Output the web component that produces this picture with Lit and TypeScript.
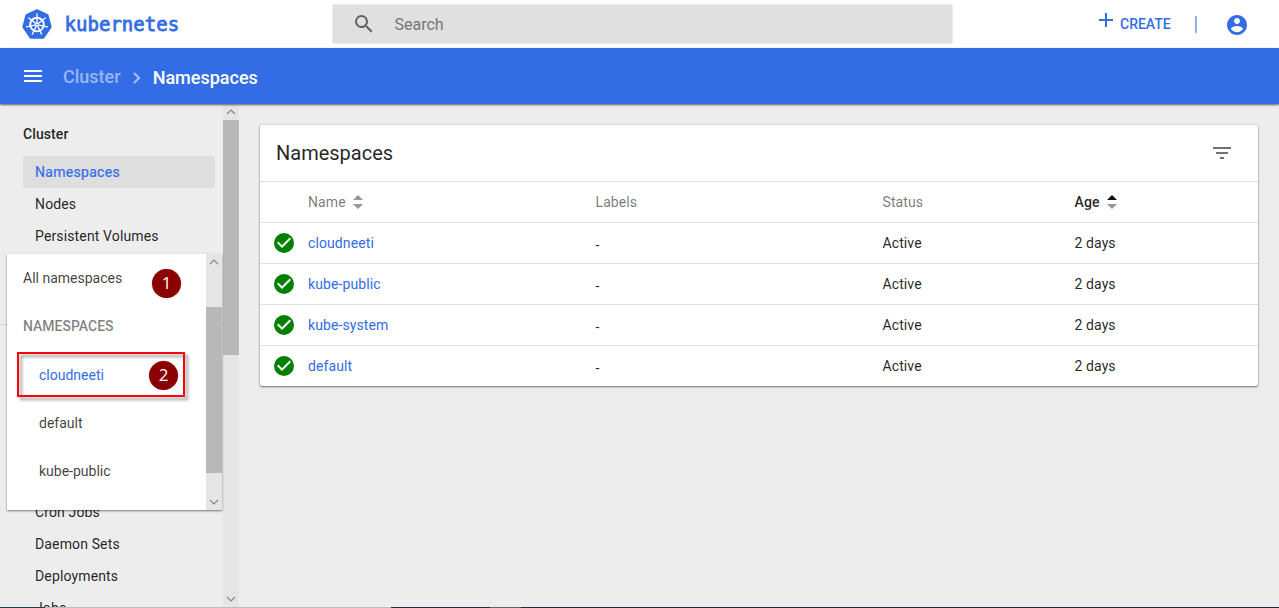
import { LitElement, html, css, svg } from "lit";
import { customElement, property } from "lit/decorators.js";

const spokes = [0, 1, 2, 3, 4, 5, 6];

@customElement("scroll-bar")
class ScrollBar extends LitElement {
  @property({ type: Number }) before = 0;
  @property({ type: Number }) thumb = 100;
  static styles = css`
    :host { display: flex; flex-direction: column; background: #e5e5e5; width: 16px; flex: none; }
    .arrow { height: 16px; display: flex; align-items: center; justify-content: center; flex: none; }
    .thumb { background: #b8b8b8; flex: none; }
    .rest { flex: 1; }
    path { fill: none; stroke: #838383; stroke-width: 1.1; }
  `;
  render() {
    return html`
      <div class="arrow"><svg width="10" height="6" viewBox="0 0 10 6"><path d="M1 5l4-4 4 4" /></svg></div>
      <div style="height:${this.before}px"></div>
      <div class="thumb" style="height:${this.thumb}px"></div>
      <div class="rest"></div>
      <div class="arrow"><svg width="10" height="6" viewBox="0 0 10 6"><path d="M1 1l4 4 4-4" /></svg></div>
    `;
  }
}

@customElement("app-root")
class AppRoot extends LitElement {
  static styles = css`
    :host { display: flex; flex-direction: column; height: 608px; width: 1279px; overflow: hidden; position: relative;
      font-family: Roboto, sans-serif; font-size: 14px; color: rgba(0,0,0,.87); background: #ededed; box-sizing: border-box; }
    * { box-sizing: border-box; }
    svg { display: block; flex: none; }
    .top { height: 48px; background: #fff; display: flex; flex: none; padding-left: 22px; }
    .logo { margin-top: 9px; }
    .wordmark { margin-left: 12px; width: 120px; height: 48px; }
    .wordmark text { font-family: "DejaVu Sans Mono", monospace; font-size: 19px; fill: #326de6; stroke: #326de6; stroke-width: .8; }
    .search { margin: 4px 0 0 148px; width: 621px; height: 40px; background: #e0e0e0; border: 1px solid #ebebeb; border-radius: 2px;
      display: flex; align-items: center; color: #757575; font-size: 16px; padding-left: 18.5px; }
    .search span { margin-left: 19px; padding-top: 1px; }
    .create { margin-left: 146px; display: flex; color: #326de6; font-weight: 500; line-height: 48px; }
    .create svg { margin: 13px 7px 0 0; }
    .divider { width: 2px; height: 17px; background: linear-gradient(90deg, #a6a0f0 50%, #84c4ff 50%); margin: 16px 0 0 24px; }
    .user { margin: 13px 0 0 28px; }
    .bar { height: 56px; background: #326de6; flex: none; display: flex; align-items: center; padding: 2px 0 0 20px; color: #fff;
      font-size: 18px; font-weight: 500; box-shadow: 0 1px 2px rgba(0,0,0,.6); position: relative; z-index: 2; }
    .bar .menu { margin-top: -2px; }
    .bar .parent { color: rgba(255,255,255,.5); margin: -2px 0 0 17px; }
    .bar .chev { margin: 2px 12px 0 12px; }
    .bar .here { padding-top: 1px; }
    .main { flex: 1; display: flex; min-height: 0; padding-bottom: 1px; }
    .side { width: 223px; padding: 14px 8px 0 23px; letter-spacing: .14px; position: relative; overflow: hidden; }
    .side .head { font-weight: 500; line-height: 32px; height: 38px; letter-spacing: .1px; }
    .item { height: 32px; line-height: 32px; padding-left: 12px; }
    .item.on { background: #dedede; border-radius: 2px; color: #326de6; -webkit-text-stroke: .2px #326de6; letter-spacing: .3px; }
    .hidden { height: 244px; }
    .rule { position: absolute; left: 0; top: 220px; width: 100%; height: 1px; background: #d0d0d0; }
    .popup { position: absolute; z-index: 3; left: 7px; top: 254px; width: 215px; height: 256px; background: #fff; display: flex;
      box-shadow: 0 1px 2px rgba(0,0,0,.5); }
    .options { flex: 1; padding-left: 16px; color: rgba(0,0,0,.76); }
    .options div { height: 48px; line-height: 48px; }
    .options .opt { padding: 1px 0 0 16px; }
    .options .cap { color: rgba(0,0,0,.5); font-weight: 500; }
    .options .sel { color: #326de6; }
    .frame { position: absolute; z-index: 4; left: 17px; top: 352px; width: 168px; height: 45px; border: 2px solid #f90505;
      filter: drop-shadow(3px 3px 1.5px rgba(0,0,0,.4)); }
    .badge { position: absolute; z-index: 5; width: 29px; height: 29px; border-radius: 50%; background: #8b0000; color: #fff;
      font: 17px/28px "Open Sans", sans-serif; text-align: center; box-shadow: 0 0 0 .5px #e4cccc; }
    .one { left: 152px; top: 269px; }
    .two { left: 149px; top: 361px; }
    .content { flex: 1; padding: 21px 0 0 21px; }
    .card { width: 998px; background: #fff; border-radius: 2px; box-shadow: 0 1px 2px rgba(0,0,0,.5), 0 0 1px 1px rgba(0,0,0,.07); }
    .title { height: 56px; display: flex; align-items: center; justify-content: space-between; padding: 0 24px 0 16px; font-size: 20px; }
    .row { height: 41px; display: grid; grid-template-columns: 48px 287.5px 287px 192px 1fr; align-items: center; border-top: 1px solid #dfdfdf; letter-spacing: .1px; }
    .row.th { color: rgba(0,0,0,.54); }
    .row .name { color: #326de6; }
    .row .ok { margin-left: 14px; }
    .row .dash { padding-top: 3px; }
    .sort { display: flex; align-items: center; gap: 7px; }
    .sort.active { color: rgba(0,0,0,.87); font-weight: 500; }
    .strip { position: absolute; z-index: 6; left: 0; bottom: 0; width: 100%; height: 1px;
      background: linear-gradient(90deg, #21404a 45px, #bdbdbd 45px, #bdbdbd 391px, #1d2f3a 391px, #1d2f3a 490px, #5a6468 490px, #5a6468 521px, #1c2938 521px); }
  `;

  private sortIcon(up: string) {
    return html`<svg width="10" height="14" viewBox="0 0 10 14"><path fill=${up} d="M0 5L5 0l5 5z" /><path fill="#969696" d="M0 9h10l-5 5z" /></svg>`;
  }

  render() {
    return html`
      <div class="top">
        <svg class="logo" width="30" height="31" viewBox="0 0 30 31">
          <path fill="#326de6" stroke="#326de6" stroke-width="2" stroke-linejoin="round" d="M15 1.2L25.6 6.2 28.7 18 21.4 28.8H8.6L1.3 18 4.4 6.2z" />
          <g fill="none" stroke="#fff" stroke-width="1.3" stroke-linecap="round">
            <circle cx="15" cy="15.6" r="6.8" stroke-width="1.9" />
            ${spokes.map((i) => svg`<path d="M15 13.6V5" transform="rotate(${(i * 360) / 7} 15 15.6)" />`)}
          </g>
          <circle cx="15" cy="15.6" r="2" fill="#fff" /><circle cx="15" cy="15.6" r=".8" fill="#326de6" />
        </svg>
        <svg class="wordmark"><text x=".6" y="31" textLength="114.5">kubernetes</text></svg>
        <div class="search">
          <svg width="24" height="24" viewBox="0 0 24 24"><path fill="#616161" d="M15.5 14h-.79l-.28-.27A6.47 6.47 0 0 0 16 9.5 6.5 6.5 0 1 0 9.5 16c1.61 0 3.09-.59 4.23-1.57l.27.28v.79l5 4.99L20.49 19l-4.99-5zm-6 0C7.01 14 5 11.99 5 9.5S7.01 5 9.5 5 14 7.01 14 9.5 11.99 14 9.5 14z" /></svg>
          <span>Search</span>
        </div>
        <div class="create">
          <svg width="14" height="14" viewBox="0 0 14 14"><path fill="#326de6" d="M6 0h2v6h6v2H8v6H6V8H0V6h6z" /></svg><span>CREATE</span>
        </div>
        <div class="divider"></div>
        <svg class="user" width="24" height="24" viewBox="0 0 24 24"><path fill="#326de6" d="M12 2C6.48 2 2 6.48 2 12s4.48 10 10 10 10-4.48 10-10S17.52 2 12 2zm0 3c1.66 0 3 1.34 3 3s-1.34 3-3 3-3-1.34-3-3 1.34-3 3-3zm0 14.2c-2.5 0-4.71-1.28-6-3.22.03-1.99 4-3.08 6-3.08 1.99 0 5.97 1.09 6 3.08-1.29 1.94-3.5 3.22-6 3.22z" /></svg>
      </div>
      <div class="bar">
        <svg class="menu" width="26" height="24" viewBox="0 0 26 24"><path fill="#fff" d="M4 6h18v2H4zM4 11h18v2H4zM4 16h18v2H4z" /></svg>
        <span class="parent">Cluster</span>
        <svg class="chev" width="8" height="12" viewBox="0 0 8 12"><path d="M1 1l5 5-5 5" fill="none" stroke="#a9c1f5" stroke-width="2" /></svg>
        <span class="here">Namespaces</span>
      </div>
      <div class="main">
        <div class="side">
          <div class="rule"></div>
          <div class="head">Cluster</div>
          <div class="item on">Namespaces</div>
          <div class="item">Nodes</div>
          <div class="item">Persistent Volumes</div>
          <div class="hidden"></div>
          <div class="item">Cron Jobs</div>
          <div class="item">Daemon Sets</div>
          <div class="item">Deployments</div>
          <div class="item">Jobs</div>
        </div>
        <scroll-bar .before=${0} .thumb=${235}></scroll-bar>
        <div class="content">
          <div class="card">
            <div class="title">Namespaces
              <svg width="24" height="24" viewBox="0 0 24 24"><path fill="#757070" d="M10 18h4v-2h-4v2zM3 6v2h18V6H3zm3 7h12v-2H6v2z" /></svg>
            </div>
            <div class="row th"><span></span><span class="sort">Name ${this.sortIcon("#969696")}</span><span>Labels</span><span>Status</span><span class="sort active">Age ${this.sortIcon("#111")}</span></div>
            ${["cloudneeti", "kube-public", "kube-system", "default"].map((n) => html`
              <div class="row">
                <svg class="ok" width="20" height="20" viewBox="2 2 20 20"><circle cx="12" cy="12" r="10" fill="#008000" /><path fill="#fff" d="M10 17l-5-5 1.41-1.41L10 14.17l7.59-7.59L19 8z" /></svg>
                <span class="name">${n}</span><span class="dash">-</span><span>Active</span><span>2 days</span>
              </div>`)}
          </div>
        </div>
      </div>
      <div class="popup">
        <div class="options">
          <div>All namespaces</div>
          <div class="cap">NAMESPACES</div>
          <div class="opt sel">cloudneeti</div>
          <div class="opt">default</div>
          <div class="opt">kube-public</div>
        </div>
        <scroll-bar .before=${37} .thumb=${166}></scroll-bar>
      </div>
      <div class="frame"></div>
      <div class="badge one">1</div>
      <div class="badge two">2</div>
      <div class="strip"></div>
    `;
  }
}
